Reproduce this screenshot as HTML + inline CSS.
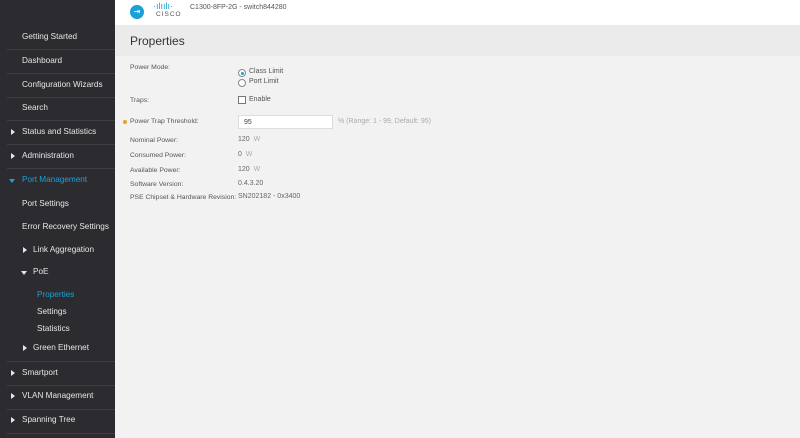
<!DOCTYPE html>
<html><head><style>
body{margin:0;width:800px;height:438px;overflow:hidden;background:#f2f2f2;font-family:"Liberation Sans",sans-serif;position:relative}
.sb{position:absolute;left:0;top:0;width:115px;height:438px;background:#2c2c30}
.sb div{position:absolute;color:#e6e6e6;font-size:8.2px;white-space:nowrap}
.ln{position:absolute;left:7px;width:108px;height:1px;background:#3e3e44}
.tri{position:absolute;width:0;height:0;border-top:3px solid transparent;border-bottom:3px solid transparent;border-left:4px solid #e6e6e6}
.trd{position:absolute;width:0;height:0;border-left:3px solid transparent;border-right:3px solid transparent;border-top:4px solid #e6e6e6}
.t{position:absolute;font-size:6.8px;color:#555;white-space:nowrap}
.v{position:absolute;font-size:7px;color:#666;white-space:nowrap}
.u{color:#aaa}
</style></head><body>
<div style="position:absolute;left:115px;top:0;width:685px;height:25px;background:#fff"></div>
<div style="position:absolute;left:130px;top:5px;width:14px;height:14px;border-radius:50%;background:#1ba0d7;color:#fff;font-size:8px;text-align:center;line-height:14px">⇥</div>
<div style="position:absolute;left:153px;top:1px;font-size:9px;color:#1ba0d7">·ılıılı·</div>
<div style="position:absolute;left:156px;top:11px;font-size:6.5px;color:#555;letter-spacing:1px">CISCO</div>
<div style="position:absolute;left:190px;top:4px;font-size:7px;color:#555">C1300-8FP-2G - switch844280</div>
<div style="position:absolute;left:115px;top:25px;width:685px;height:31px;background:#ebebeb"></div>
<div style="position:absolute;left:130px;top:34px;font-size:12px;color:#333">Properties</div>
<div class="sb">
<div style="left:22px;top:32px">Getting Started</div><div class="ln" style="top:49px"></div>
<div style="left:22px;top:56px">Dashboard</div><div class="ln" style="top:73px"></div>
<div style="left:22px;top:80px">Configuration Wizards</div><div class="ln" style="top:97px"></div>
<div style="left:22px;top:103px">Search</div><div class="ln" style="top:120px"></div>
<span class="tri" style="left:11px;top:129px"></span><div style="left:22px;top:127px">Status and Statistics</div><div class="ln" style="top:144px"></div>
<span class="tri" style="left:11px;top:153px"></span><div style="left:22px;top:151px">Administration</div><div class="ln" style="top:168px"></div>
<span class="trd" style="left:9px;top:179px;border-top-color:#1ba0d7"></span><div style="left:22px;top:175px;color:#1ba0d7">Port Management</div>
<div style="left:22px;top:199px">Port Settings</div>
<div style="left:22px;top:222px">Error Recovery Settings</div>
<span class="tri" style="left:23px;top:247px"></span><div style="left:33px;top:245px">Link Aggregation</div>
<span class="trd" style="left:21px;top:271px"></span><div style="left:33px;top:267px">PoE</div>
<div style="left:37px;top:290px;color:#1ba0d7">Properties</div>
<div style="left:37px;top:307px">Settings</div>
<div style="left:37px;top:324px">Statistics</div>
<span class="tri" style="left:23px;top:345px"></span><div style="left:33px;top:343px">Green Ethernet</div><div class="ln" style="top:361px"></div>
<span class="tri" style="left:11px;top:370px"></span><div style="left:22px;top:368px">Smartport</div><div class="ln" style="top:385px"></div>
<span class="tri" style="left:11px;top:393px"></span><div style="left:22px;top:391px">VLAN Management</div><div class="ln" style="top:409px"></div>
<span class="tri" style="left:11px;top:417px"></span><div style="left:22px;top:415px">Spanning Tree</div><div class="ln" style="top:433px"></div>
</div>
<div class="t" style="left:130px;top:64px">Power Mode:</div>
<div style="position:absolute;left:238px;top:69px;width:6px;height:6px;border:1px solid #888;border-radius:50%;background:#fff"><div style="position:absolute;left:1.5px;top:1.5px;width:3px;height:3px;border-radius:50%;background:#1ba0d7"></div></div>
<div class="v" style="left:249px;top:68px;color:#555">Class Limit</div>
<div style="position:absolute;left:238px;top:79px;width:6px;height:6px;border:1px solid #888;border-radius:50%;background:#fff"></div>
<div class="v" style="left:249px;top:78px;color:#555">Port Limit</div>
<div class="t" style="left:130px;top:97px">Traps:</div>
<div style="position:absolute;left:238px;top:96px;width:6px;height:6px;border:1px solid #777;background:#fff"></div>
<div class="v" style="left:249px;top:96px;color:#555">Enable</div>
<div style="position:absolute;left:123px;top:120px;width:4px;height:4px;border-radius:50%;background:#f0a020"></div>
<div class="t" style="left:130px;top:118px">Power Trap Threshold:</div>
<div style="position:absolute;left:238px;top:115px;width:95px;height:14px;background:#fff;border:1px solid #ddd;font-size:7px;color:#444;line-height:14px;padding-left:5px;box-sizing:border-box">95</div>
<div class="v u" style="left:338px;top:118px">% (Range: 1 - 99, Default: 95)</div>
<div class="t" style="left:130px;top:137px">Nominal Power:</div><div class="v" style="left:238px;top:136px">120 <span class="u">&nbsp;W</span></div>
<div class="t" style="left:130px;top:152px">Consumed Power:</div><div class="v" style="left:238px;top:151px">0 <span class="u">&nbsp;W</span></div>
<div class="t" style="left:130px;top:167px">Available Power:</div><div class="v" style="left:238px;top:166px">120 <span class="u">&nbsp;W</span></div>
<div class="t" style="left:130px;top:181px">Software Version:</div><div class="v" style="left:238px;top:180px">0.4.3.20</div>
<div class="t" style="left:130px;top:194px">PSE Chipset &amp; Hardware Revision:</div><div class="v" style="left:238px;top:193px">SN202182 - 0x3400</div>
</body></html>
